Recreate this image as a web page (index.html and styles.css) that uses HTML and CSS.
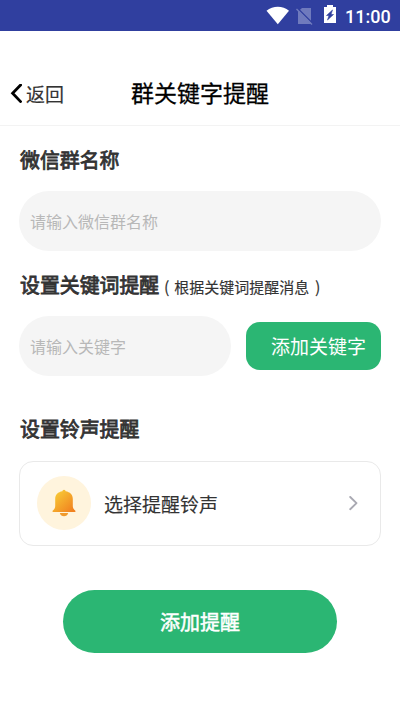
FILE: index.html
```html
<!DOCTYPE html>
<html lang="zh-CN">
<head>
<meta charset="utf-8">
<title>群关键字提醒</title>
<link rel="stylesheet" href="styles.css">
</head>
<body>
<div class="status">
  <svg class="status-icons" width="90" height="31" viewBox="0 0 90 31">
    <path d="M-.5 10.8C6 5.4 15.7 5.4 22 10.8L10.8 24.3Z" fill="#fff"/>
    <path d="M35 8H44V24H31V11.5Z" fill="#6f7abd"/>
    <path d="M30.5 8.2L46 23.7" stroke="#303f9f" stroke-width="1.6"/>
    <path d="M29.5 9L45 24.5" stroke="#6f7abd" stroke-width="1.4"/>
    <path d="M60 5H66V7H69V23H57V7H60Z" fill="#fff"/>
    <path d="M65.5 10L59.5 15.5H62L60.5 20L66.5 14.5H64Z" fill="#303f9f" stroke="#303f9f" stroke-width=".6"/>
  </svg>
  <span class="clock">11:00</span>
</div>
<header class="nav">
  <a class="back">
    <svg width="13" height="20" viewBox="0 0 13 20"><path d="M11.6 1L3.6 9.3L11.6 17.6" fill="none" stroke="#000" stroke-width="2.8" stroke-linecap="round" stroke-linejoin="miter"/></svg>
    <span>返回</span>
  </a>
  <h1 class="title">群关键字提醒</h1>
</header>
<main class="content">
  <h2 class="heading">微信群名称</h2>
  <div class="field">请输入微信群名称</div>
  <h2 class="heading second">设置关键词提醒<span class="note"><span class="open">(</span>根据关键词提醒消息<span class="close">)</span></span></h2>
  <div class="row">
    <div class="field">请输入关键字</div>
    <button class="add">添加关键字</button>
  </div>
  <h2 class="heading third">设置铃声提醒</h2>
  <div class="card">
    <div class="bell">
      <svg width="54" height="54" viewBox="0 0 54 54">
        <defs><linearGradient id="g" x1="0" y1="0" x2="1" y2="1"><stop offset=".1" stop-color="#f8cc36"/><stop offset=".9" stop-color="#f18220"/></linearGradient></defs>
        <path d="M27 13.8C28 13.8 28.5 14.6 28.6 15.3C33 16 35.8 18.6 35.8 23V30C35.8 32.5 37 33.5 38.4 34.8V36H15.6V34.8C17 33.5 18.2 32.5 18.2 30V23C18.2 18.6 21 16 25.4 15.3C25.5 14.6 26 13.8 27 13.8Z" fill="url(#g)"/>
        <path d="M22.8 37H31.2C30.6 39.2 29 40.3 27 40.3S23.4 39.2 22.8 37Z" fill="#f09a2c"/>
      </svg>
    </div>
    <span class="card-label">选择提醒铃声</span>
    <svg class="chevron" width="10" height="16" viewBox="0 0 10 16"><path d="M1.2 1L7.5 7.1L1.2 13.2" fill="none" stroke="#a9a9b2" stroke-width="1.9" stroke-linecap="round" stroke-linejoin="round"/></svg>
  </div>
  <button class="submit">添加提醒</button>
</main>
</body>
</html>
```
FILE: styles.css
```css
* { box-sizing: border-box; }
body {
  margin: 0;
  width: 400px;
  height: 711px;
  overflow: hidden;
  background: #fff;
  color: #333;
  font-family: "Noto Sans CJK SC", sans-serif;
}
h1, h2 { margin: 0; font-weight: 400; }
button { border: 0; padding: 0; font-family: inherit; color: #fff; background: #2bb673; }
svg { display: block; flex: none; }
.status {
  display: flex;
  height: 31px;
  padding-left: 267px;
  background: #303f9f;
}
.status-icons { margin-right: -12px; overflow: visible; }
.clock {
  color: #fff;
  font: 500 18px/33px Roboto, sans-serif;
}
.nav {
  display: grid;
  grid-template-columns: 131px auto 1fr;
  align-items: center;
  height: 95px;
  padding-top: 30px;
  border-bottom: 1px solid #f3f3f3;
}
.back {
  display: flex;
  align-items: center;
  gap: 4px;
  padding: 1px 0 0 9px;
  font-size: 19px;
  line-height: 28px;
  -webkit-text-stroke: .15px #333;
}
.title {
  padding-bottom: 2px;
  color: #000;
  font-size: 23px;
  line-height: 34px;
  -webkit-text-stroke: .3px #000;
}
.content { padding: 19px 19px 0; }
.heading {
  height: 30px;
  padding-left: 1px;
  font-size: 19.9px;
  line-height: 30px;
  -webkit-text-stroke: .8px #333;
  white-space: nowrap;
}
.field {
  height: 60px;
  margin-top: 16px;
  padding-left: 11px;
  border-radius: 30px;
  background: #f5f5f5;
  color: #b8b8b8;
  font-size: 16px;
  line-height: 60px;
}
.second { margin-top: 19px; }
.note { font-size: 15px; -webkit-text-stroke: .15px #333; }
.open, .close { display: inline-block; width: 15px; font-size: 16px; text-align: center; }
.close { padding-left: 2px; }
.row { display: grid; grid-template-columns: 212px 135px; gap: 15px; align-items: center; margin-top: 16px; }
.row .field { margin: 0; }
.add {
  height: 48px;
  padding: 0 0 2px 10px;
  border-radius: 14px;
  font-size: 19px;
}
.third { margin-top: 38px; }
.card {
  display: flex;
  align-items: center;
  height: 85px;
  margin-top: 17px;
  padding: 0 21px 0 17px;
  border: 1px solid #e9e9e9;
  border-radius: 14px;
}
.bell { width: 54px; height: 54px; margin-bottom: 1px; border-radius: 50%; background: #fff4dd; }
.card-label { margin-left: 13px; font-size: 19px; line-height: 28px; -webkit-text-stroke: .15px #333; }
.chevron { margin-left: auto; }
.submit {
  display: block;
  width: 274px;
  height: 63px;
  margin: 44px auto 0;
  border-radius: 32px;
  font-size: 20px;
  -webkit-text-stroke: .5px #fff;
}
```
